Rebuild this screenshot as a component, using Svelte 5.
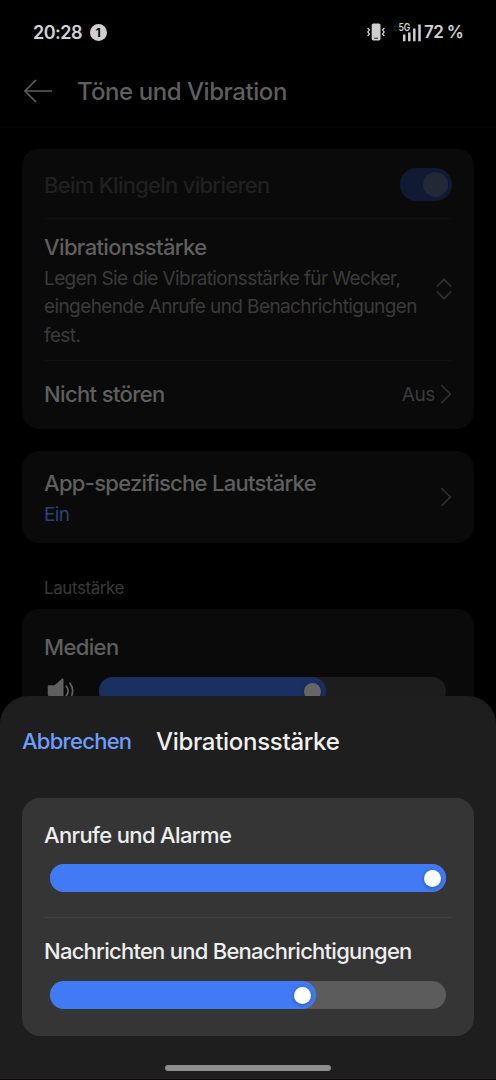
<script>
  const sliders = [
    { label: 'Anrufe und Alarme', value: 100, cls: 'calls' },
    { label: 'Nachrichten und Benachrichtigungen', value: 67.1, cls: 'messages' }
  ];
</script>

<div class="phone">
  <header class="status">
    <span class="clock">20:28</span>
    <svg class="count" width="17" height="17" viewBox="0 0 17 17">
      <circle cx="8.5" cy="8.5" r="8.5" fill="#cfcfcf" />
      <text x="8.2" y="12.7" font-size="11.5" font-weight="700" text-anchor="middle" fill="#000">1</text>
    </svg>
    <svg class="vibrate" width="18" height="20" viewBox="0 0 18 20">
      <rect x="4.7" y="1.4" width="8.8" height="17" rx="1.6" fill="#cfcfcf" />
      <path d="M7.2 16.2h3.8" stroke="#222" stroke-width="1" />
      <path d="M.6 6l1.8 1.8L.9 10l1.5 2.1L.6 14M17.4 6l-1.8 1.8 1.5 2.2-1.5 2.1 1.8 1.9" fill="none" stroke="#cfcfcf" stroke-width="1.3" />
    </svg>
    <svg class="signal" width="30" height="28" viewBox="0 -4 30 28">
      <path d="M1.2 4.2L2.8 2.2 4.4 4.2M1.2 6.2l1.6 2 1.6-2" fill="none" stroke="#303030" stroke-width="1" />
      <text x="5.4" y="8" font-size="10" font-weight="600" fill="#cfcfcf" textLength="12" lengthAdjust="spacingAndGlyphs">5G</text>
      <path d="M11.2 11.4v6.8M16.3 9.6v8.6M21.3 5.6v12.6M26.5 1.6v16.6" stroke="#cfcfcf" stroke-width="2.5" />
    </svg>
    <span class="battery">72 %</span>
  </header>

  <nav class="bar">
    <svg width="30" height="24" viewBox="0 0 30 24" fill="none" stroke="#5d5d5d" stroke-width="1.7">
      <path d="M29 12H2M13 1L2 12l11 11" />
    </svg>
    <h1>Töne und Vibration</h1>
  </nav>

  <main>
    <section class="card">
      <div class="row ring">
        <span class="title faded">Beim Klingeln vibrieren</span>
        <span class="toggle"><i></i></span>
      </div>
      <div class="row strength">
        <div class="copy">
          <span class="title vib">Vibrationsstärke</span>
          <p>
            <span>Legen Sie die Vibrationsstärke für Wecker,</span><br />
            <span>eingehende Anrufe und Benachrichtigungen</span><br />
            <span>fest.</span>
          </p>
        </div>
        <svg class="updown" width="16" height="22" viewBox="0 0 16 22" fill="none" stroke="#303030" stroke-width="1.7">
          <path d="M1 8.5L8 1.3l7 7.2M1 13.5l7 7.2 7-7.2" />
        </svg>
      </div>
      <div class="row dnd">
        <span class="title">Nicht stören</span>
        <span class="value">Aus</span>
        <svg width="12" height="20" viewBox="0 0 12 20" fill="none" stroke="#303030" stroke-width="1.7">
          <path d="M1.3 1l9 9-9 9" />
        </svg>
      </div>
    </section>

    <section class="card app">
      <div class="copy">
        <span class="title apptitle">App-spezifische Lautstärke</span>
        <span class="on">Ein</span>
      </div>
      <svg width="12" height="20" viewBox="0 0 12 20" fill="none" stroke="#303030" stroke-width="1.7">
        <path d="M1.3 1l9 9-9 9" />
      </svg>
    </section>

    <h2>Lautstärke</h2>

    <section class="card media">
      <span class="title">Medien</span>
      <div class="volume">
        <svg width="28" height="28" viewBox="0 0 28 28">
          <path d="M1.7 9.4Q1.7 8.2 2.9 8.2H8.5L16 1.7Q17.5 .8 17.5 2.4V24.4Q17.5 26 16 25L8.5 19H3.2Q1.7 19 1.7 17.8Z" fill="#5f5f5f" />
          <path d="M20.3 9.2Q24 14 20.3 18.8M24 6.3Q29.4 14 24 21.7" fill="none" stroke="#5f5f5f" stroke-width="1.8" stroke-linecap="round" />
        </svg>
        <div class="track dim"><div class="fill" style="width: 65.4%"><i></i></div></div>
      </div>
    </section>
  </main>

  <div class="sheet">
    <div class="sheethead">
      <button>Abbrechen</button>
      <h3>Vibrationsstärke</h3>
    </div>
    <div class="panel">
      {#each sliders as s}
        <div class="setting">
          <span class="title {s.cls}">{s.label}</span>
          <div class="track"><div class="fill" style="width: {s.value}%"><i></i></div></div>
        </div>
      {/each}
    </div>
    <div class="home"></div>
  </div>
</div>

<style>
  :global(body) { background: #000; }
  .phone {
    position: relative;
    width: 496px;
    height: 1080px;
    overflow: hidden;
    background: #000;
    color: #5f5f5f;
    font-family: Inter, "Liberation Sans", sans-serif;
    box-sizing: border-box;
  }
  .phone * { box-sizing: border-box; }
  h1, h2, h3, p { margin: 0; font-weight: 400; }
  svg { display: block; flex: none; }
  span { white-space: nowrap; }

  .status {
    display: flex;
    align-items: center;
    height: 64px;
    padding: 0 33px;
    color: #d2d2d2;
    font-size: 18px;
    font-weight: 600;
  }
  .clock { flex: none; width: 49px; letter-spacing: -0.5px; }
  .count { margin-left: 8px; }
  .vibrate { margin-left: 260px; }
  .signal { margin: 1px 0 0 8px; }
  .battery { flex: none; margin-left: 1px; font-size: 17px; letter-spacing: -0.65px; }

  .bar {
    display: flex;
    align-items: center;
    height: 64px;
    padding: 0 23px 9px;
    border-bottom: 2px solid #040404;
  }
  h1 { margin: 1px 0 0 24px; font-size: 24px; font-weight: 500; white-space: nowrap; letter-spacing: -0.44px; }

  main { padding: 21px 22px 0; }
  .card { border-radius: 17px; background: #0a0a0a; padding: 0 22px; }
  .title { font-size: 22px; line-height: 28px; font-weight: 500; letter-spacing: -0.63px; }
  .row { display: flex; align-items: center; border-bottom: 1px solid #101010; }
  .row:last-child { border: 0; }
  .ring { height: 70px; padding-top: 2px; justify-content: space-between; }
  .faded { color: #202020; letter-spacing: -0.73px; }
  .toggle {
    display: flex;
    justify-content: flex-end;
    width: 52px;
    height: 33px;
    padding: 4px;
    border-radius: 17px;
    background: #101a33;
  }
  .toggle i { width: 25px; height: 25px; border-radius: 50%; background: #222836; }
  .strength { height: 142px; justify-content: space-between; }
  .copy { display: flex; flex-direction: column; }
  .strength .copy { padding-top: 4px; }
  .strength .updown { margin-top: -1px; }
  p { color: #3b3b3b; font-size: 19px; line-height: 28.2px; margin-top: 4px; letter-spacing: -0.6px; }
  .dnd { height: 68px; padding-bottom: 2px; }
  .value { margin-left: auto; margin-right: 5px; color: #3b3b3b; font-size: 19px; letter-spacing: -0.4px; }
  .app { display: flex; align-items: center; justify-content: space-between; height: 92px; margin-top: 22px; }
  .app .copy { padding-top: 3px; }
  .apptitle { letter-spacing: -0.71px; }
  .on { color: #2b4373; font-size: 19px; line-height: 28px; margin-top: 4px; letter-spacing: -0.6px; }
  h2 { height: 66px; padding: 20px 22px 0; color: #3a3a3a; font-size: 17px; line-height: 51px; letter-spacing: -0.42px; }
  .media { display: flex; flex-direction: column; height: 120px; padding-top: 24px; }
  .volume { display: flex; align-items: center; margin-top: 16px; padding: 0 6px 0 2px; gap: 25px; }
  .track { height: 28px; border-radius: 14px; background: #5c5c5c; }
  .fill { display: flex; align-items: center; justify-content: flex-end; height: 28px; padding-right: 5px; border-radius: 14px; background: #407bf5; }
  .fill i { width: 17px; height: 17px; border-radius: 50%; background: #fff; box-shadow: 0 1px 4px rgba(0, 0, 0, 0.3); }
  .dim { flex: 1; background: #1d1d1d; }
  .dim .fill { background: #1b3062; }
  .dim .fill i { background: #666; }

  .sheet {
    position: absolute;
    left: 0;
    right: 0;
    bottom: 0;
    height: 384px;
    border-radius: 28px 28px 0 0;
    background: #1e1e1e;
    padding: 0 22px;
    border-bottom: 1px solid #100a0e;
  }
  .sheethead { display: flex; align-items: center; height: 102px; padding-bottom: 12px; }
  button { width: 134px; padding: 0; border: 0; background: none; color: #6e9cfa; font: 500 22px Inter, sans-serif; text-align: left; letter-spacing: -0.73px; }
  h3 { color: #f0f0f0; font-size: 24px; font-weight: 500; letter-spacing: -0.3px; }
  .panel { height: 238px; border-radius: 18px; background: #353535; padding: 0 22px; color: #eee; }
  .setting { height: 120px; padding-top: 23px; border-bottom: 1px solid #404040; }
  .setting:last-child { height: 118px; padding-top: 19px; border: 0; }
  .setting .title { display: block; }
  .messages { letter-spacing: -0.74px; }
  .setting .track { margin: 15px 6px 0; }
  .setting:last-child .track { margin-top: 16px; }
  .home { width: 166px; height: 6px; margin: 29px auto 0; border-radius: 3px; background: #8e8e8e; }
</style>
